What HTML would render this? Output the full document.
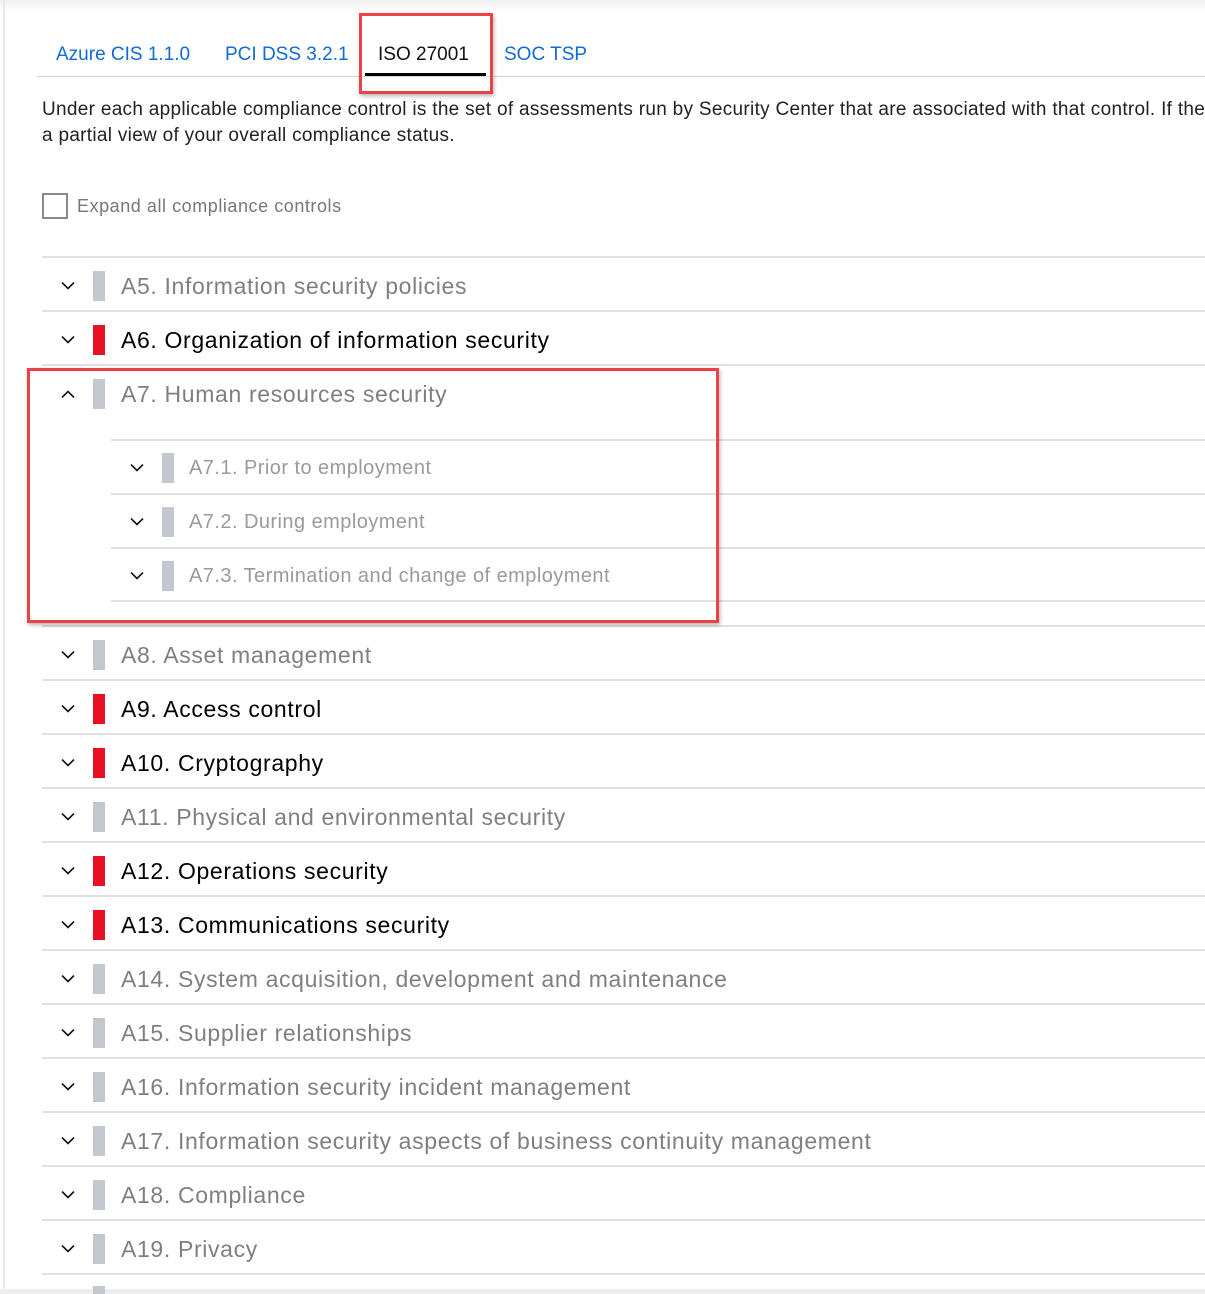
<!DOCTYPE html>
<html><head><meta charset="utf-8"><style>
body{margin:0;width:1205px;height:1294px;background:#fff;position:relative;overflow:hidden;font-family:"Liberation Sans",sans-serif}
.abs{position:absolute}
.line{position:absolute;height:2px;background:#e1e1e1;right:0}
.chev{position:absolute;width:14px;height:8px}
.bar{position:absolute;width:12px;height:30px}
.t{position:absolute;font-size:23px;letter-spacing:.65px;white-space:nowrap;line-height:30px}
.st{position:absolute;font-size:20px;letter-spacing:.45px;white-space:nowrap;line-height:30px;color:#9a9a9a}
.g{color:#7f7f7f}.k{color:#000}
.tab{position:absolute;top:44px;font-size:19px}
</style></head><body>
<div class="abs" style="left:0;top:0;width:1205px;height:12px;background:linear-gradient(#f0f0f0,#fff)"></div>
<div class="abs" style="left:3px;top:0;width:2px;height:1294px;background:#e8e8e8"></div>
<div class="abs" style="left:0;top:1289px;width:1205px;height:5px;background:#eeeeee"></div>

<div class="tab" style="left:56px;color:#0f6cd6">Azure CIS 1.1.0</div>
<div class="tab" style="left:225px;color:#0f6cd6">PCI DSS 3.2.1</div>
<div class="tab" style="left:378px;color:#111">ISO 27001</div>
<div class="tab" style="left:504px;color:#0f6cd6">SOC TSP</div>
<div class="abs" style="left:37px;top:76px;width:1168px;height:1px;background:#d6d6d6"></div>
<div class="abs" style="left:365px;top:73px;width:121px;height:3px;background:#000"></div>
<div class="abs" style="left:359px;top:13px;width:128px;height:75px;border:3px solid #ec4146;box-shadow:1px 2px 4px rgba(0,0,0,.3)"></div>

<div class="abs" style="left:42px;top:97px;font-size:19px;letter-spacing:.3px;line-height:26px;color:#222;white-space:nowrap">Under each applicable compliance control is the set of assessments run by Security Center that are associated with that control. If they are<br>a partial view of your overall compliance status.</div>

<div class="abs" style="left:42px;top:193px;width:22px;height:22px;border:2px solid #8a8a8a"></div>
<div class="abs" style="left:77px;top:196px;font-size:18px;letter-spacing:.55px;color:#777">Expand all compliance controls</div>

<div id="rows"></div>
<div class="abs" style="left:27px;top:368px;width:686px;height:249px;border:3px solid #ec4146;box-shadow:1px 2px 4px rgba(0,0,0,.3)"></div>
<div class="bar abs" style="left:93px;top:1286px;height:8px;background:#c3c8ce"></div>
<script>
var rows=[[286,"A5. Information security policies",0],[340,"A6. Organization of information security",1],[394,"A7. Human resources security",0,1],[655,"A8. Asset management",0],[709,"A9. Access control",1],[763,"A10. Cryptography",1],[817,"A11. Physical and environmental security",0],[871,"A12. Operations security",1],[925,"A13. Communications security",1],[979,"A14. System acquisition, development and maintenance",0],[1033,"A15. Supplier relationships",0],[1087,"A16. Information security incident management",0],[1141,"A17. Information security aspects of business continuity management",0],[1195,"A18. Compliance",0],[1249,"A19. Privacy",0]];
var h="";
function chev(x,y,up){return '<svg class="chev" style="left:'+x+'px;top:'+(y-4)+'px" viewBox="0 0 14 8"><path d="'+(up?'M1 7.5L7 1.5L13 7.5':'M1 .5L7 6.5L13 .5')+'" fill="none" stroke="#111" stroke-width="1.6"/></svg>';}
rows.forEach(function(r){var y=r[0];
h+='<div class="line" style="left:42px;top:'+(y-30)+'px"></div>';
h+=chev(61,y,r[3]);
h+='<div class="bar" style="left:93px;top:'+(y-15)+'px;background:'+(r[2]?'#e81123':'#c3c8ce')+'"></div>';
h+='<div class="t '+(r[2]?'k':'g')+'" style="left:121px;top:'+(y-15)+'px">'+r[1]+'</div>';});
h+='<div class="line" style="left:42px;top:1273px"></div><div class="line" style="left:42px;top:625px"></div>';
[[468,"A7.1. Prior to employment"],[522,"A7.2. During employment"],[576,"A7.3. Termination and change of employment"]].forEach(function(s){var y=s[0];
h+='<div class="line" style="left:111px;top:'+(y-29)+'px"></div>';
h+=chev(130,y);
h+='<div class="bar" style="left:162px;top:'+(y-15)+'px;background:#c3c8ce"></div>';
h+='<div class="st" style="left:189px;top:'+(y-15)+'px">'+s[1]+'</div>';});
h+='<div class="line" style="left:111px;top:600px"></div>';
document.getElementById("rows").innerHTML=h;
</script>
</body></html>
